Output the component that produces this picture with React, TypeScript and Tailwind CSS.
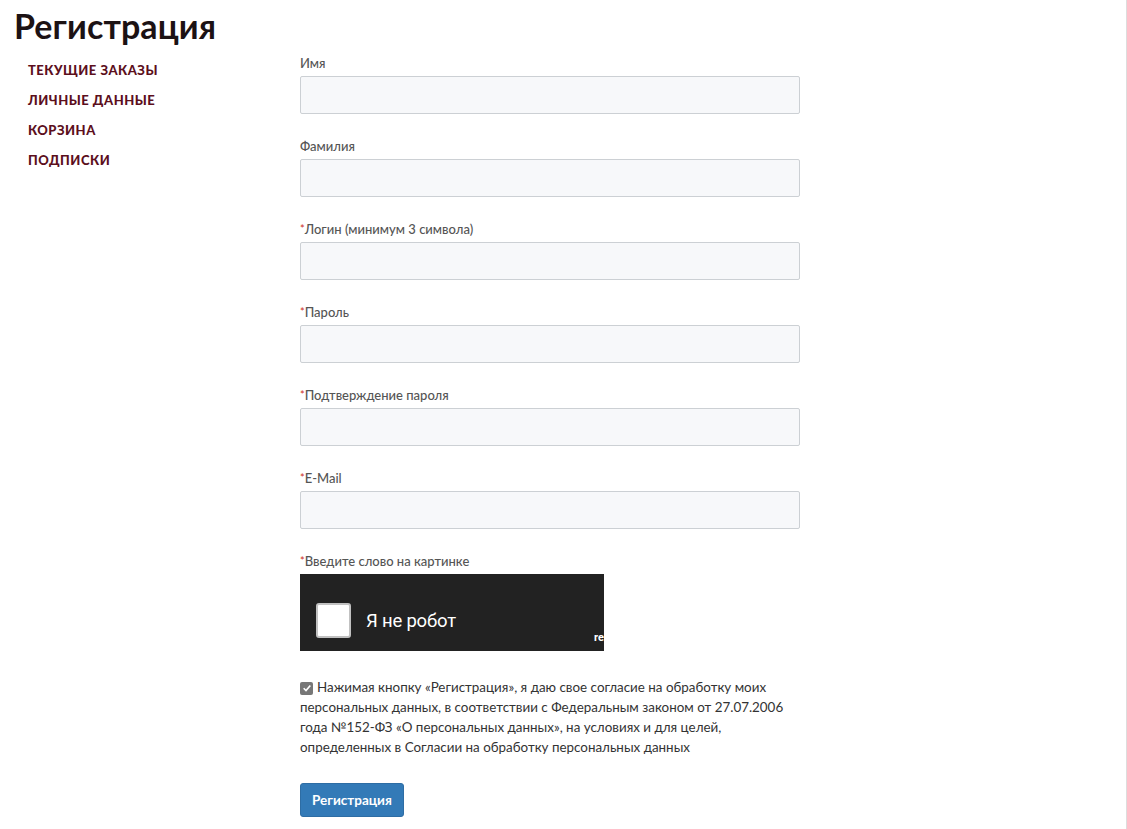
const menu = ["Текущие заказы", "Личные данные", "Корзина", "Подписки"];

const fields = [
  { label: "Имя", required: false, type: "text" },
  { label: "Фамилия", required: false, type: "text" },
  { label: "Логин (минимум 3 символа)", required: true, type: "text" },
  { label: "Пароль", required: true, type: "password" },
  { label: "Подтверждение пароля", required: true, type: "password" },
  { label: "E-Mail", required: true, type: "email" },
];

function Label({ text, required }: { text: string; required: boolean }) {
  return (
    <label className="block text-[13px] leading-[18px] text-[#555] font-medium">
      {required && <span className="text-[#d0342c] text-[11px] align-top">*</span>}
      {text}
    </label>
  );
}

export default function App() {
  return (
    <div className="min-h-screen bg-white font-['Lato',sans-serif] text-[#333] border-r border-[#ddd]">
      <h1 className="pl-[14px] pt-[4px] h-[48px] text-[34px] leading-[44px] font-bold text-[#1c1214] tracking-[0.1px]">
        Регистрация
      </h1>
      <div className="flex">
        <nav className="w-[300px] shrink-0 pl-[28px] pt-[13px] flex flex-col gap-[12px]">
          {menu.map((item) => (
            <a
              key={item}
              href="#"
              className="text-[13px] leading-[18px] font-black uppercase tracking-[0.5px] text-[#5c0f1c]"
            >
              {item}
            </a>
          ))}
        </nav>
        <form className="w-[500px] pt-[6px]">
          {fields.map((f) => (
            <div key={f.label} className="mb-[23px]">
              <Label text={f.label} required={f.required} />
              <input
                type={f.type}
                className="mt-[4px] block w-full h-[38px] bg-[#f7f8fa] border border-[#ccd0d4] rounded-[2px] px-3 outline-none"
              />
            </div>
          ))}
          <div>
            <Label text="Введите слово на картинке" required />
            <div className="mt-[4px] w-[304px] h-[77px] bg-[#222] overflow-hidden relative">
              <div className="flex items-center pl-[16px] pt-[29px] gap-[15px]">
                <div className="w-[35px] h-[35px] bg-white rounded-[3px] border-2 border-[#c1c1c1]" />
                <span className="mt-[3px] text-white text-[18.5px] font-['Roboto',sans-serif] tracking-[-0.2px]">
                  Я не робот
                </span>
              </div>
              <span className="absolute left-[294px] top-[56px] text-white text-[11px] font-bold font-['Roboto',sans-serif]">
                re
              </span>
            </div>
          </div>
          <div className="mt-[26px] text-[13.4px] leading-[20px] text-[#333]">
            <span className="inline-flex align-[-1px] w-[13px] h-[13px] bg-[#777] rounded-[2px] items-center justify-center mr-[4px]">
              <svg viewBox="0 0 12 12" className="w-[10px] h-[10px]">
                <path d="M2 6.3 L4.8 9 L10 3" stroke="white" strokeWidth="2" fill="none" />
              </svg>
            </span>
            Нажимая кнопку «Регистрация», я даю свое согласие на обработку моих персональных данных, в соответствии с Федеральным законом от 27.07.2006 года №152-ФЗ «О персональных данных», на условиях и для целей, определенных в Согласии на обработку персональных данных
          </div>
          <button
            type="button"
            className="mt-[26px] h-[34px] px-[11px] bg-[#337ab7] border border-[#2e6da4] rounded-[3px] text-white text-[13.5px] font-bold"
          >
            Регистрация
          </button>
        </form>
      </div>
    </div>
  );
}
